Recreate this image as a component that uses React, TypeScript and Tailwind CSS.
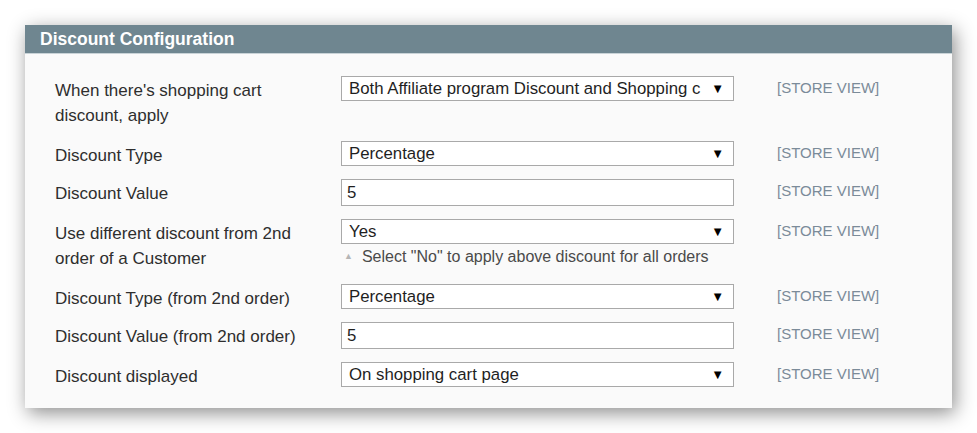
import React from "react";

const font = { fontFamily: '"Liberation Sans", Arial, sans-serif' };

function Select({ value }: { value: string }) {
  return (
    <div className="flex h-[25px] w-[393px] items-center border border-[#a9a9a9] bg-white pl-[7px] pr-[9px] text-[16.8px] text-[#1f1f1f]">
      <span className="flex-1 overflow-hidden whitespace-nowrap">{value}</span>
      <span className="text-[13px] text-black">▼</span>
    </div>
  );
}

function Input({ value }: { value: string }) {
  return (
    <div className="flex h-[27px] w-[393px] items-center border border-[#a9a9a9] bg-white pl-[5px] text-[16.8px] text-[#1f1f1f]">
      {value}
    </div>
  );
}

function Row({
  label,
  children,
  multi,
}: {
  label: React.ReactNode;
  children: React.ReactNode;
  multi?: boolean;
}) {
  return (
    <div className="flex items-start">
      <div
        className={`w-[316px] pl-[30px] pt-[2px] text-[17px] leading-[25px] text-[#2e2e2e] ${
          multi ? "" : "-mb-[2px]"
        }`}
      >
        {label}
      </div>
      <div className="w-[393px]">{children}</div>
      <div className="pl-[43px] pt-[3px] text-[15px] leading-[18px] text-[#7b8b99]">[STORE VIEW]</div>
    </div>
  );
}

export default function App() {
  return (
    <div className="min-h-[433px] w-[977px] bg-white pl-[25px] pt-[25px]" style={font}>
      <div className="w-[927px] bg-[#fafafa] shadow-[3px_5px_18px_rgba(0,0,0,0.45)]">
        <div className="flex h-[29px] items-center border-b border-[#c9d3d7] bg-[#6f8690] pl-[15px] text-[17.5px] font-bold text-white">
          Discount Configuration
        </div>
        <div className="flex flex-col gap-[13px] pb-[21px] pt-[22px]">
          <Row
            multi
            label={
              <>
                When there's shopping cart
                <br />
                discount, apply
              </>
            }
          >
            <Select value="Both Affiliate program Discount and Shopping c" />
          </Row>
          <Row label="Discount Type">
            <Select value="Percentage" />
          </Row>
          <Row label="Discount Value">
            <Input value="5" />
          </Row>
          <Row
            multi
            label={
              <>
                Use different discount from 2nd
                <br />
                order of a Customer
              </>
            }
          >
            <Select value="Yes" />
            <div className="mt-[3px] flex items-center pl-[3px] text-[16px] leading-[19px] text-[#4a4a4a]">
              <span className="mr-[9px] text-[9px] text-[#b5b5b5]">▲</span>
              Select "No" to apply above discount for all orders
            </div>
          </Row>
          <Row label="Discount Type (from 2nd order)">
            <Select value="Percentage" />
          </Row>
          <Row label="Discount Value (from 2nd order)">
            <Input value="5" />
          </Row>
          <Row label="Discount displayed">
            <Select value="On shopping cart page" />
          </Row>
        </div>
      </div>
    </div>
  );
}
